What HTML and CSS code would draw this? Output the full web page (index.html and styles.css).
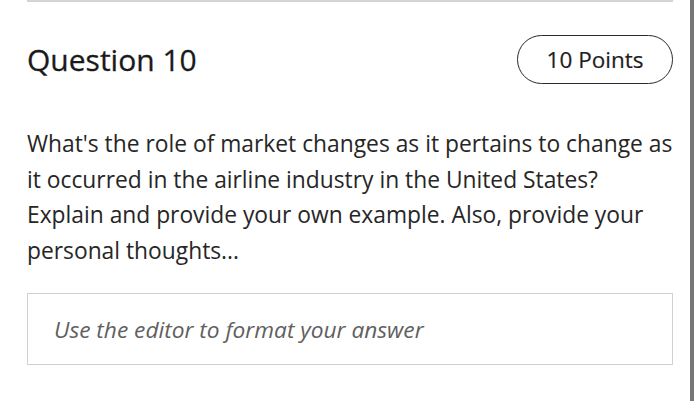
FILE: index.html
```html
<!DOCTYPE html>
<html>
<head>
<meta charset="utf-8">
<link rel="stylesheet" href="styles.css">
</head>
<body>
<div class="page">
  <main class="question">
    <div class="rule"></div>
    <header class="q-head">
      <h2 class="q-title">Question 10</h2>
      <span class="points">10 Points</span>
    </header>
    <p class="q-text">What's the role of market changes as it pertains to change as it occurred in the airline industry in the United States?<br>Explain and provide your own example. Also, provide your personal thoughts...</p>
    <div class="editor">Use the editor to format your answer</div>
  </main>
  <div class="scrollbar"></div>
</div>
</body>
</html>
```
FILE: styles.css
```css
html, body {
  margin: 0;
  padding: 0;
  background: #fff;
}
body {
  font-family: "Open Sans", "Liberation Sans", sans-serif;
  color: #222;
}
.page {
  display: flex;
  height: 401px;
  overflow: hidden;
}
.question {
  width: 646px;
  margin-left: 27px;
  display: flex;
  flex-direction: column;
}
.rule {
  height: 2px;
  background: #d4d4d4;
}
.q-head {
  display: flex;
  justify-content: space-between;
  align-items: center;
  margin-top: 33px;
  height: 49px;
}
.q-title {
  margin: 0;
  font-size: 30px;
  font-weight: 400;
  color: #1a1a1a;
  line-height: 1;
  -webkit-text-stroke: 0.3px #1a1a1a;
}
.points {
  box-sizing: border-box;
  width: 156px;
  height: 49px;
  border: 1.5px solid #2a2a2a;
  border-radius: 25px;
  display: flex;
  align-items: center;
  justify-content: center;
  font-size: 22.5px;
  font-weight: 400;
  color: #1e1e1e;
  -webkit-text-stroke: 0.2px #1e1e1e;
}
.q-text {
  margin: 42px 0 0;
  font-size: 22.8px;
  line-height: 35.5px;
  color: #262626;
}
.editor {
  box-sizing: border-box;
  margin-top: 25px;
  height: 72px;
  border: 1.5px solid #d0d0d0;
  padding-left: 26px;
  display: flex;
  align-items: center;
  font-style: italic;
  font-size: 22.7px;
  color: #606060;
}
.scrollbar {
  width: 4px;
  margin-left: 17px;
  background: #777;
  height: 100%;
}
```
